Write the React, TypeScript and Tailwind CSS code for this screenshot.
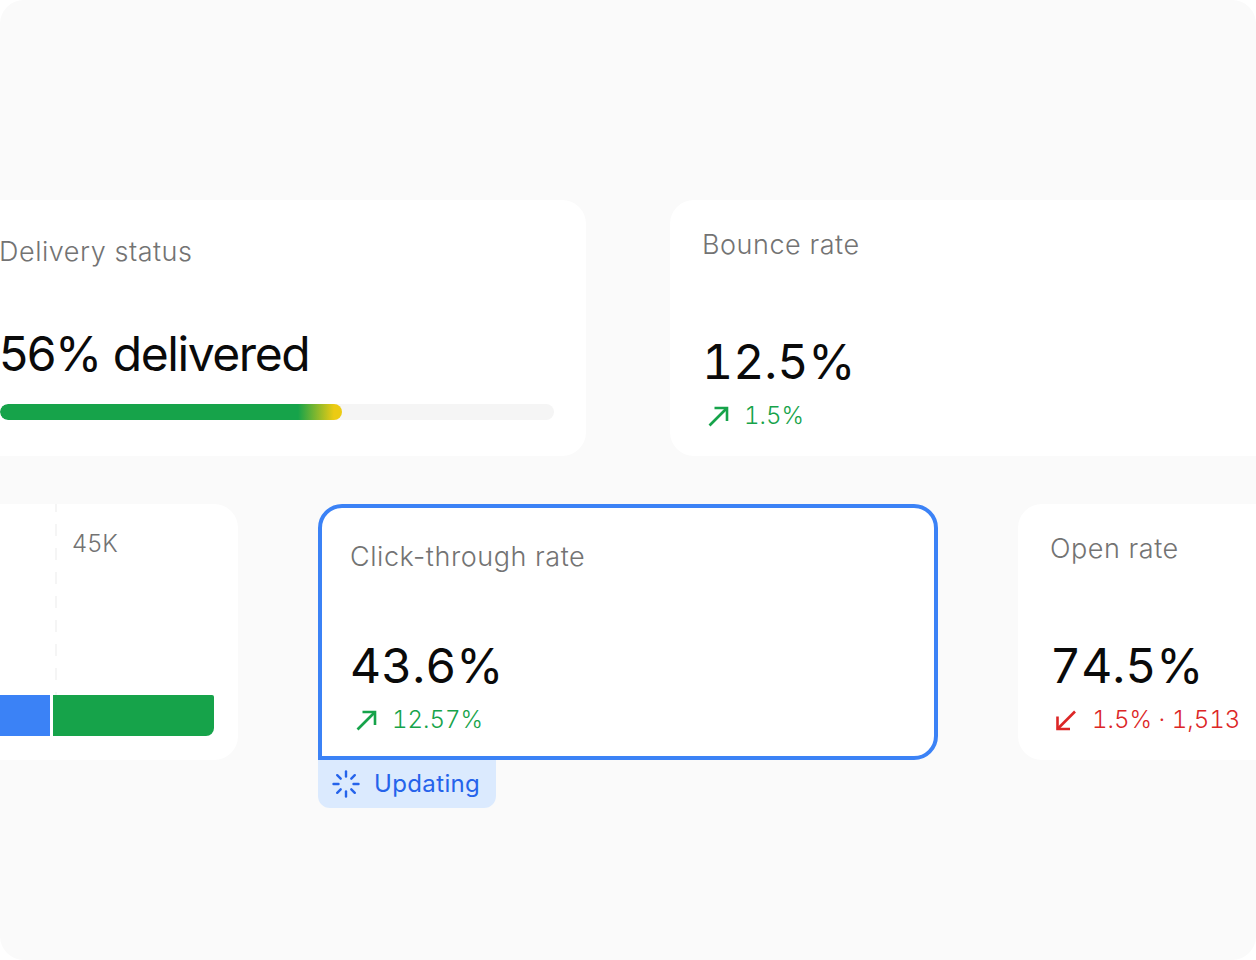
import React from 'react';

function ArrowUpRight() {
  return (
    <svg width="24" height="24" viewBox="0 0 24 24" fill="none" stroke="#16a34a" strokeWidth="2.6" className="ml-1 shrink-0">
      <path d="M3.5 21.5 L21 4" />
      <path d="M8.5 4 H21 V17" />
    </svg>
  );
}

function ArrowDownLeft() {
  return (
    <svg width="24" height="24" viewBox="0 0 24 24" fill="none" stroke="#dc2626" strokeWidth="2.6" className="ml-1 shrink-0">
      <path d="M21 3.5 L3.5 21" />
      <path d="M3.5 8.5 V21 H16" />
    </svg>
  );
}

function Spinner() {
  return (
    <svg width="28" height="28" viewBox="0 0 28 28" fill="none" stroke="#2563eb" strokeWidth="2.4" strokeLinecap="round" className="shrink-0">
      <path d="M14 1.5 V6.5" />
      <path d="M14 21.5 V26.5" />
      <path d="M1.5 14 H6.5" />
      <path d="M21.5 14 H26.5" />
      <path d="M5.2 5.2 L8.7 8.7" />
      <path d="M19.3 19.3 L22.8 22.8" />
      <path d="M5.2 22.8 L8.7 19.3" />
      <path d="M19.3 8.7 L22.8 5.2" />
    </svg>
  );
}

function StatCard({ title, value, change, up, className }: { title: string; value: string; change: string; up: boolean; className: string }) {
  return (
    <div className={`flex h-[256px] flex-col rounded-[24px] bg-white ${className}`}>
      <div className="text-[27px] font-light leading-[40px] tracking-[0.02em] text-[#737373]">{title}</div>
      <div className="mt-auto text-[48px] leading-[60px] tabular-nums text-[#0a0a0a]">{value}</div>
      <div className={`mt-2 flex h-8 items-center gap-3.5 text-[24px] font-light tabular-nums ${up ? 'text-[#16a34a]' : 'text-[#dc2626]'}`}>
        {up ? <ArrowUpRight /> : <ArrowDownLeft />}
        <span>{change}</span>
      </div>
    </div>
  );
}

export default function App() {
  return (
    <div className="h-[960px] w-[1256px] overflow-hidden rounded-[24px] bg-[#fafafa] pt-[200px] font-['Inter',sans-serif]">
      <div className="flex gap-[84px]">
        <div className="ml-[-32px] flex h-[256px] w-[618px] shrink-0 flex-col rounded-[24px] bg-white pb-9 pl-[31px] pr-8 pt-8">
          <div className="text-[27px] font-light leading-[40px] tracking-[0.02em] text-[#737373]">Delivery status</div>
          <div className="mt-auto text-[48px] leading-[60px] tracking-[-0.03em] text-[#0a0a0a]">56% delivered</div>
          <div className="ml-px mt-5 h-4 overflow-hidden rounded-full bg-[#f5f5f5]">
            <div className="h-full w-[342px] rounded-full bg-[linear-gradient(90deg,#16a34a_0,#16a34a_298px,#eccb13_334px)]"></div>
          </div>
        </div>
        <StatCard title="Bounce rate" value="12.5%" change="1.5%" up={true} className="w-[640px] shrink-0 px-8 pb-6 pt-[25px]" />
      </div>

      <div className="mt-12 flex gap-20">
        <div className="relative ml-[-32px] h-[256px] w-[270px] shrink-0 overflow-hidden rounded-[24px] bg-white">
          <div className="absolute bottom-[65px] left-[87px] top-[-4px] w-0.5 bg-[repeating-linear-gradient(180deg,#f5f5f5_0,#f5f5f5_12px,transparent_12px,transparent_24px)]"></div>
          <div className="absolute left-[104px] top-5 text-[24px] font-light leading-[40px] tracking-[0.02em] text-[#737373]">45K</div>
          <div className="absolute bottom-[24px] left-0 flex h-[41px] w-[246px] gap-[3px]">
            <div className="w-[82px] bg-[#3b82f6]"></div>
            <div className="flex-1 rounded-br-lg rounded-tr-[2px] bg-[#16a34a]"></div>
          </div>
        </div>

        <div className="relative shrink-0">
          <StatCard title="Click-through rate" value="43.6%" change="12.57%" up={true} className="w-[620px] rounded-bl-none border-4 border-[#3b82f6] px-7 pb-5 pt-[29px]" />
          <div className="absolute left-0 top-full flex h-12 w-[178px] items-center gap-[14px] rounded-b-xl bg-[#dbeafe] px-3.5 text-[24px] tracking-[0.015em] text-[#2563eb]">
            <Spinner />
            <span>Updating</span>
          </div>
        </div>

        <StatCard title="Open rate" value="74.5%" change="1.5% · 1,513" up={false} className="w-[400px] shrink-0 px-8 pb-6 pt-[25px]" />
      </div>
    </div>
  );
}
